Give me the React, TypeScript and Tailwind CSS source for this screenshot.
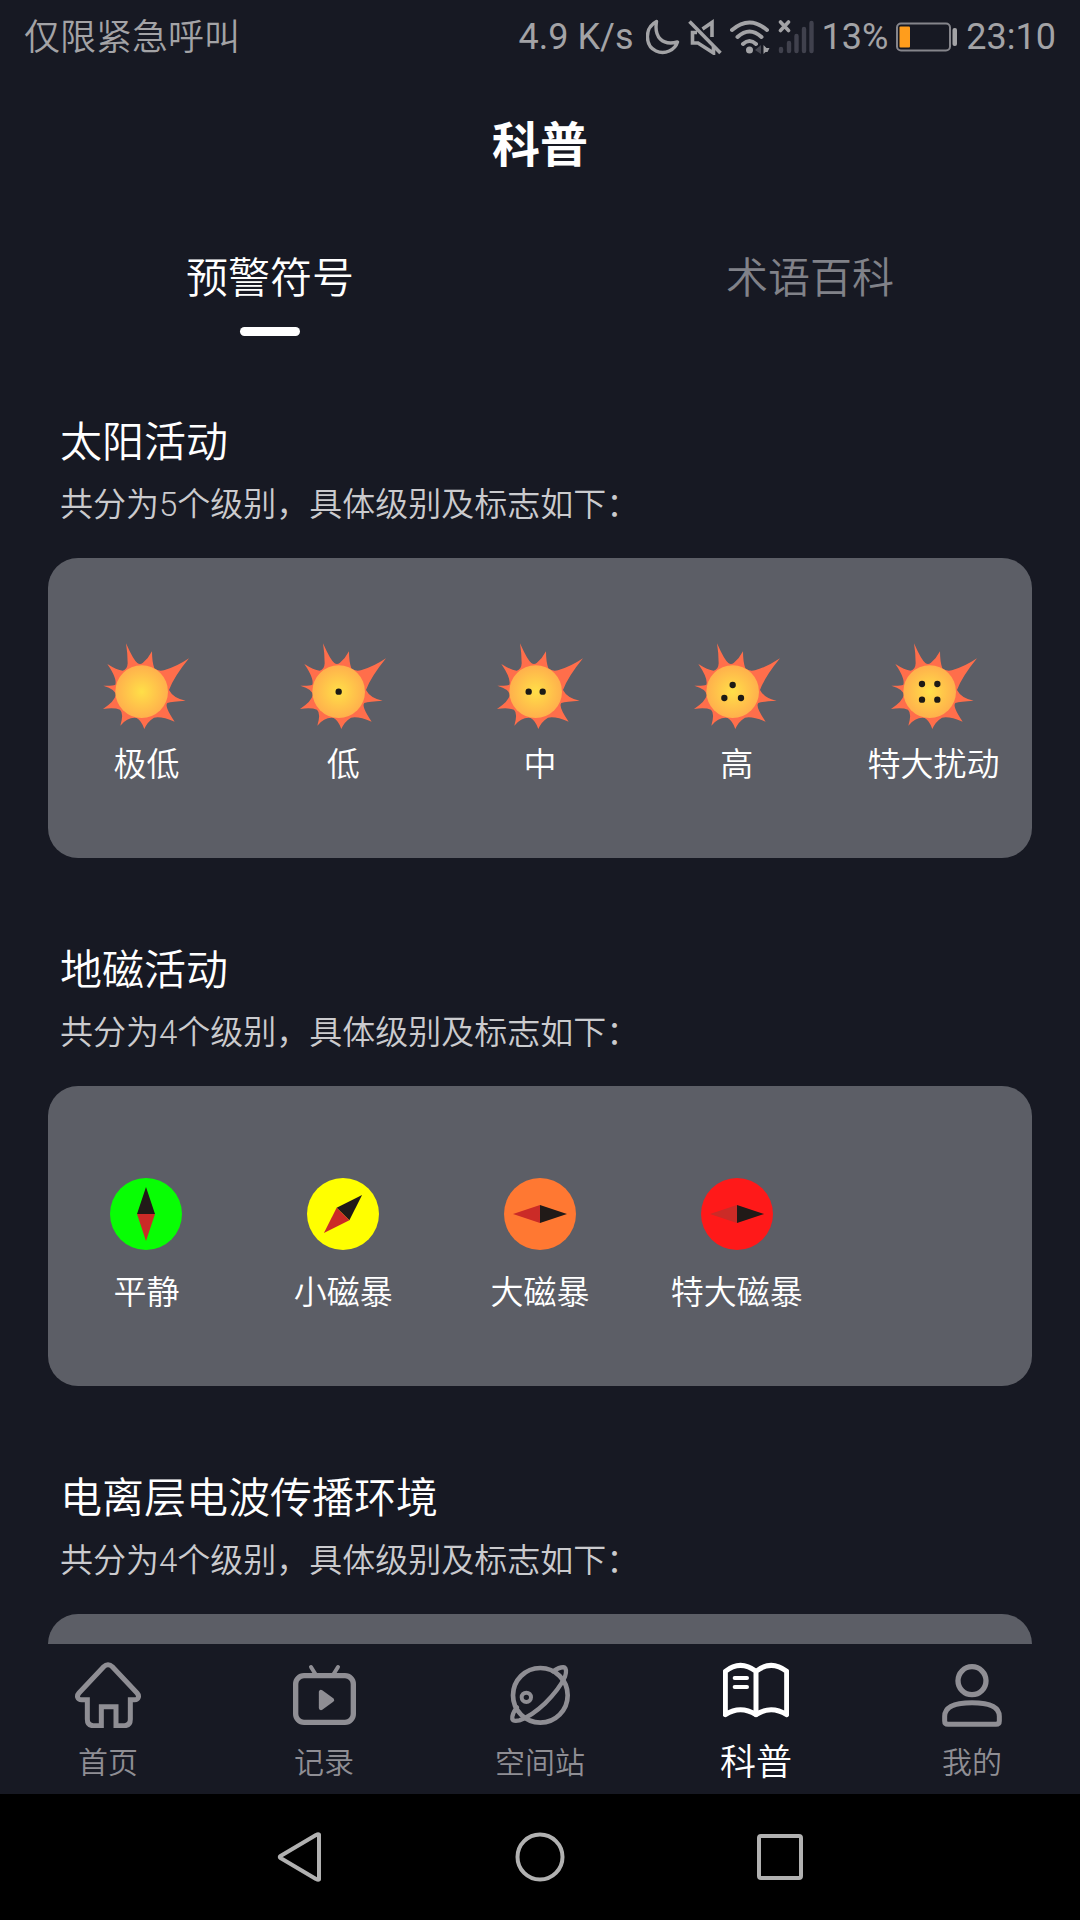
import type { ReactNode } from "react";

type Level = { label: string; icon: ReactNode };

type Section = { title: string; count: number; levels: Level[] };

function Sun({ id, dots }: { id: string; dots: number[][] }) {
  return (
    <svg viewBox="33 36 270 270" className="h-[90px] w-[90px]" aria-hidden="true">
      <defs>
        <radialGradient id={id}>
          <stop offset="0" stopColor="#ffdf48" />
          <stop offset="1" stopColor="#ffb04c" />
        </radialGradient>
      </defs>
      <path
        fill="#ff6e4b"
        d="M108 40Q130 90 142 99Q150 105 158 99Q176 84 186 64Q186 96 193 115Q204 125 222 121Q260 110 297 85Q252 140 237 180Q250 205 287 212Q246 214 232 219Q222 228 254 275Q214 258 192 263Q172 275 163 297Q155 273 140 264Q114 260 91 287Q102 250 90 239Q72 232 39 237Q74 214 77 196Q78 178 40 167Q68 168 76 164Q82 146 52 102Q80 120 98 122Q112 120 113 100Q113 70 108 40Z"
      />
      <circle cx="155" cy="185" r="79" fill={`url(#${id})`} />
      {dots.map(([x, y]) => (
        <circle key={`${x},${y}`} cx={155 + x} cy={185 + y} r="9.5" fill="#1c1a16" />
      ))}
    </svg>
  );
}

function Compass({ color, angle }: { color: string; angle: number }) {
  return (
    <svg viewBox="0 0 90 90" className="h-[90px] w-[90px]" aria-hidden="true">
      <circle cx="45" cy="44" r="36" fill={color} />
      <g transform={`rotate(${angle} 45 44)`}>
        <path d="M45 17L54 44H36Z" fill="#211a18" />
        <path d="M45 71L54 44H36Z" fill="#cb2b27" />
      </g>
    </svg>
  );
}

const sections: Section[] = [
  {
    title: "太阳活动",
    count: 5,
    levels: [
      { label: "极低", icon: <Sun id="sun0" dots={[]} /> },
      { label: "低", icon: <Sun id="sun1" dots={[[0, 0]]} /> },
      { label: "中", icon: <Sun id="sun2" dots={[[-21, 0], [21, 0]]} /> },
      { label: "高", icon: <Sun id="sun3" dots={[[0, -20], [-25, 19], [25, 19]]} /> },
      { label: "特大扰动", icon: <Sun id="sun4" dots={[[-23, -23], [23, -23], [-23, 24], [23, 24]]} /> },
    ],
  },
  {
    title: "地磁活动",
    count: 4,
    levels: [
      { label: "平静", icon: <Compass color="#08fe04" angle={0} /> },
      { label: "小磁暴", icon: <Compass color="#ffff00" angle={45} /> },
      { label: "大磁暴", icon: <Compass color="#ff7832" angle={90} /> },
      { label: "特大磁暴", icon: <Compass color="#ff1919" angle={90} /> },
    ],
  },
  { title: "电离层电波传播环境", count: 4, levels: [] },
];

const navItems = [
  {
    label: "首页",
    viewBox: "75 66 198 198",
    icon: (
      <path d="M174 74Q181 74 187 80L261 159Q267 166 265 172Q263 179 254 179H241V238Q241 257 223 257H198V200H154V257H130Q112 257 112 238V179H95Q85 179 83 172Q81 166 87 159L161 80Q167 74 174 74Z" strokeWidth="15" strokeLinejoin="miter" />
    ),
  },
  {
    label: "记录",
    viewBox: "723 66 198 198",
    icon: (
      <>
        <rect x="737" y="107" width="173" height="140" rx="25" strokeWidth="16" />
        <path d="M783 81L796 102M864 81L851 102" strokeWidth="12" />
        <path d="M813 156V204L846 180Z" fill="currentColor" strokeWidth="13" />
      </>
    ),
  },
  {
    label: "空间站",
    viewBox: "141 66 198 198",
    icon: (
      <>
        <circle cx="241" cy="166" r="82" strokeWidth="14" />
        <circle cx="199" cy="172" r="14" strokeWidth="12" />
        <path d="M279 94Q300 80 313 82Q322 88 315 110Q298 148 255 190Q215 228 178 241Q160 245 157 237Q155 222 171 202" strokeWidth="13" />
      </>
    ),
  },
  {
    label: "科普",
    active: true,
    viewBox: "789 66 198 198",
    icon: (
      <>
        <path d="M888 94Q841 58 796 94V224Q841 194 888 224Q933 194 980 224V94Q933 58 888 94ZM888 94V224" strokeWidth="15" />
        <path d="M824 114H861M824 141H861" strokeWidth="12" />
      </>
    ),
  },
  {
    label: "我的",
    viewBox: "477 186 198 198",
    icon: (
      <>
        <circle cx="576" cy="242" r="42" strokeWidth="16" />
        <path d="M576 308C528 308 494 319 494 349V363Q494 373 504 373H648Q658 373 658 363V349C658 319 624 308 576 308Z" strokeWidth="15" />
      </>
    ),
  },
];

function StatusBar() {
  return (
    <div className="flex h-[72px] shrink-0 items-center justify-between px-6 text-4xl text-[#a3a3a6]">
      <span className="pt-1 font-[350]">仅限紧急呼叫</span>
      <div className="flex items-center gap-2 pt-[2px]">
        <span className="mr-1">4.9 K/s</span>
        <svg width="34" height="36" viewBox="0 0 34 36" fill="none" stroke="currentColor" strokeWidth="3.4" strokeLinejoin="round" aria-hidden="true">
          <path d="M10.5 2.5C-2 9 -1 27 10 32C19 36 29 31 31.5 23C16 27 8 18 10.5 2.5Z" />
        </svg>
        <svg width="34" height="36" viewBox="0 0 34 36" fill="none" stroke="currentColor" strokeWidth="3.6" aria-hidden="true">
          <path d="M1.500 2.500L32.500 34" />
          <path d="M9 13.500H4.500V24H10L25.500 34V27" />
          <path d="M14.500 10L24 3.500V18" />
        </svg>
        <svg width="40" height="36" viewBox="0 0 40 36" fill="none" stroke="currentColor" strokeWidth="4" strokeLinecap="round" aria-hidden="true">
          <path d="M2 11Q19.500 -4 37 11M7.500 18Q19.500 7 31.500 18M13 25Q19.500 19 26 25" />
          <circle cx="19.500" cy="31" r="3.500" fill="currentColor" stroke="none" />
          <path d="M31 26V35L25 31Z" fill="#464751" stroke="none" />
          <path d="M33.500 26V35L35.500 33L37.500 33L39.500 29L36.500 29Z" fill="currentColor" stroke="none" />
        </svg>
        <svg width="36" height="36" viewBox="0 0 36 36" fill="none" strokeWidth="4.4" strokeLinecap="round" aria-hidden="true">
          <path stroke="#40414d" d="M3 30V32M11 24V32M18.500 17V32M26 10V32M33.500 4V32" />
          <path stroke="currentColor" strokeWidth="3.600" d="M2.500 3L10.500 11.500M10.500 3L2.500 11.500" />
        </svg>
        <span>13%</span>
        <svg width="62" height="36" viewBox="0 0 62 36" fill="none" aria-hidden="true">
          <rect x="1" y="4.500" width="53" height="27" rx="4" stroke="#85858b" strokeWidth="2" />
          <rect x="3.500" y="7.500" width="10.500" height="21" rx="1" fill="#ff9d1c" />
          <rect x="56.500" y="9" width="4.500" height="18" rx="2" fill="currentColor" />
        </svg>
        <span>23:10</span>
      </div>
    </div>
  );
}

function SystemNav() {
  return (
    <div className="flex h-[126px] shrink-0 items-center justify-center bg-black text-[#b1b1b1]">
      <button type="button" aria-label="Back" className="flex w-60 justify-center">
        <svg width="52" height="52" viewBox="0 0 52 52" fill="none" stroke="currentColor" strokeWidth="4" strokeLinejoin="round" aria-hidden="true">
          <path d="M45 3.500V48.500Q44 49 42 48L6.500 27Q5 26 6.500 25L42 4Q44 3 45 3.500Z" />
        </svg>
      </button>
      <button type="button" aria-label="Home" className="flex w-60 justify-center">
        <svg width="52" height="52" viewBox="0 0 52 52" fill="none" stroke="currentColor" strokeWidth="4" aria-hidden="true">
          <circle cx="26" cy="26" r="22.500" />
        </svg>
      </button>
      <button type="button" aria-label="Recents" className="flex w-60 justify-center">
        <svg width="52" height="52" viewBox="0 0 52 52" fill="none" stroke="currentColor" strokeWidth="4" aria-hidden="true">
          <rect x="5" y="5" width="42" height="42" rx="2" />
        </svg>
      </button>
    </div>
  );
}

export default function App() {
  return (
    <div className="flex h-screen flex-col bg-[#171923] font-[Roboto,'Noto_Sans_CJK_SC',sans-serif] text-white">
      <StatusBar />

      <h1 className="shrink-0 pt-[38px] text-center text-5xl leading-[72px] font-bold">科普</h1>

      {/* Tabs */}
      <div role="tablist" className="mt-16 flex shrink-0 text-[42px] leading-[66px] font-[350]">
        <button type="button" role="tab" aria-selected="true" className="flex flex-1 flex-col items-center gap-[15px]">
          预警符号
          <span className="h-[9px] w-[60px] rounded-full bg-white" />
        </button>
        <button type="button" role="tab" aria-selected="false" className="flex flex-1 flex-col items-center text-[#818289]">
          术语百科
        </button>
      </div>

      <main className="flex min-h-0 flex-1 flex-col gap-[78px] overflow-y-auto px-12 pt-[72px] font-[350] [scrollbar-width:none]">
        {sections.map((section) => (
          <section key={section.title} className="shrink-0">
            <h2 className="px-3 text-[42px] leading-[70px]">{section.title}</h2>
            <p className="px-3 text-[33px] leading-[54px] text-[#cbcbce]">
              共分为{section.count}个级别，具体级别及标志如下：
            </p>
            <div className="mt-[26px] grid min-h-[300px] grid-cols-5 rounded-[30px] bg-[#5c5e66] pt-[84px]">
              {section.levels.map((level) => (
                <div key={level.label} className="flex flex-col items-center gap-2">
                  {level.icon}
                  <span className="text-[33px] leading-[50px] whitespace-nowrap">{level.label}</span>
                </div>
              ))}
            </div>
          </section>
        ))}
      </main>

      <nav className="flex h-[150px] shrink-0 pt-[18px] font-[350]">
        {navItems.map((item) => (
          <a
            key={item.label}
            href="#"
            className={item.active ? "flex flex-1 flex-col items-center text-4xl text-white" : "flex flex-1 flex-col items-center text-3xl text-[#8f8e94]"}
          >
            <svg
              viewBox={item.viewBox}
              className="h-[66px] w-[66px]"
              fill="none"
              stroke="currentColor"
              strokeLinecap="round"
              strokeLinejoin="round"
              aria-hidden="true"
            >
              {item.icon}
            </svg>
            <span className="mt-[14px] leading-[42px]">{item.label}</span>
          </a>
        ))}
      </nav>

      <SystemNav />
    </div>
  );
}
